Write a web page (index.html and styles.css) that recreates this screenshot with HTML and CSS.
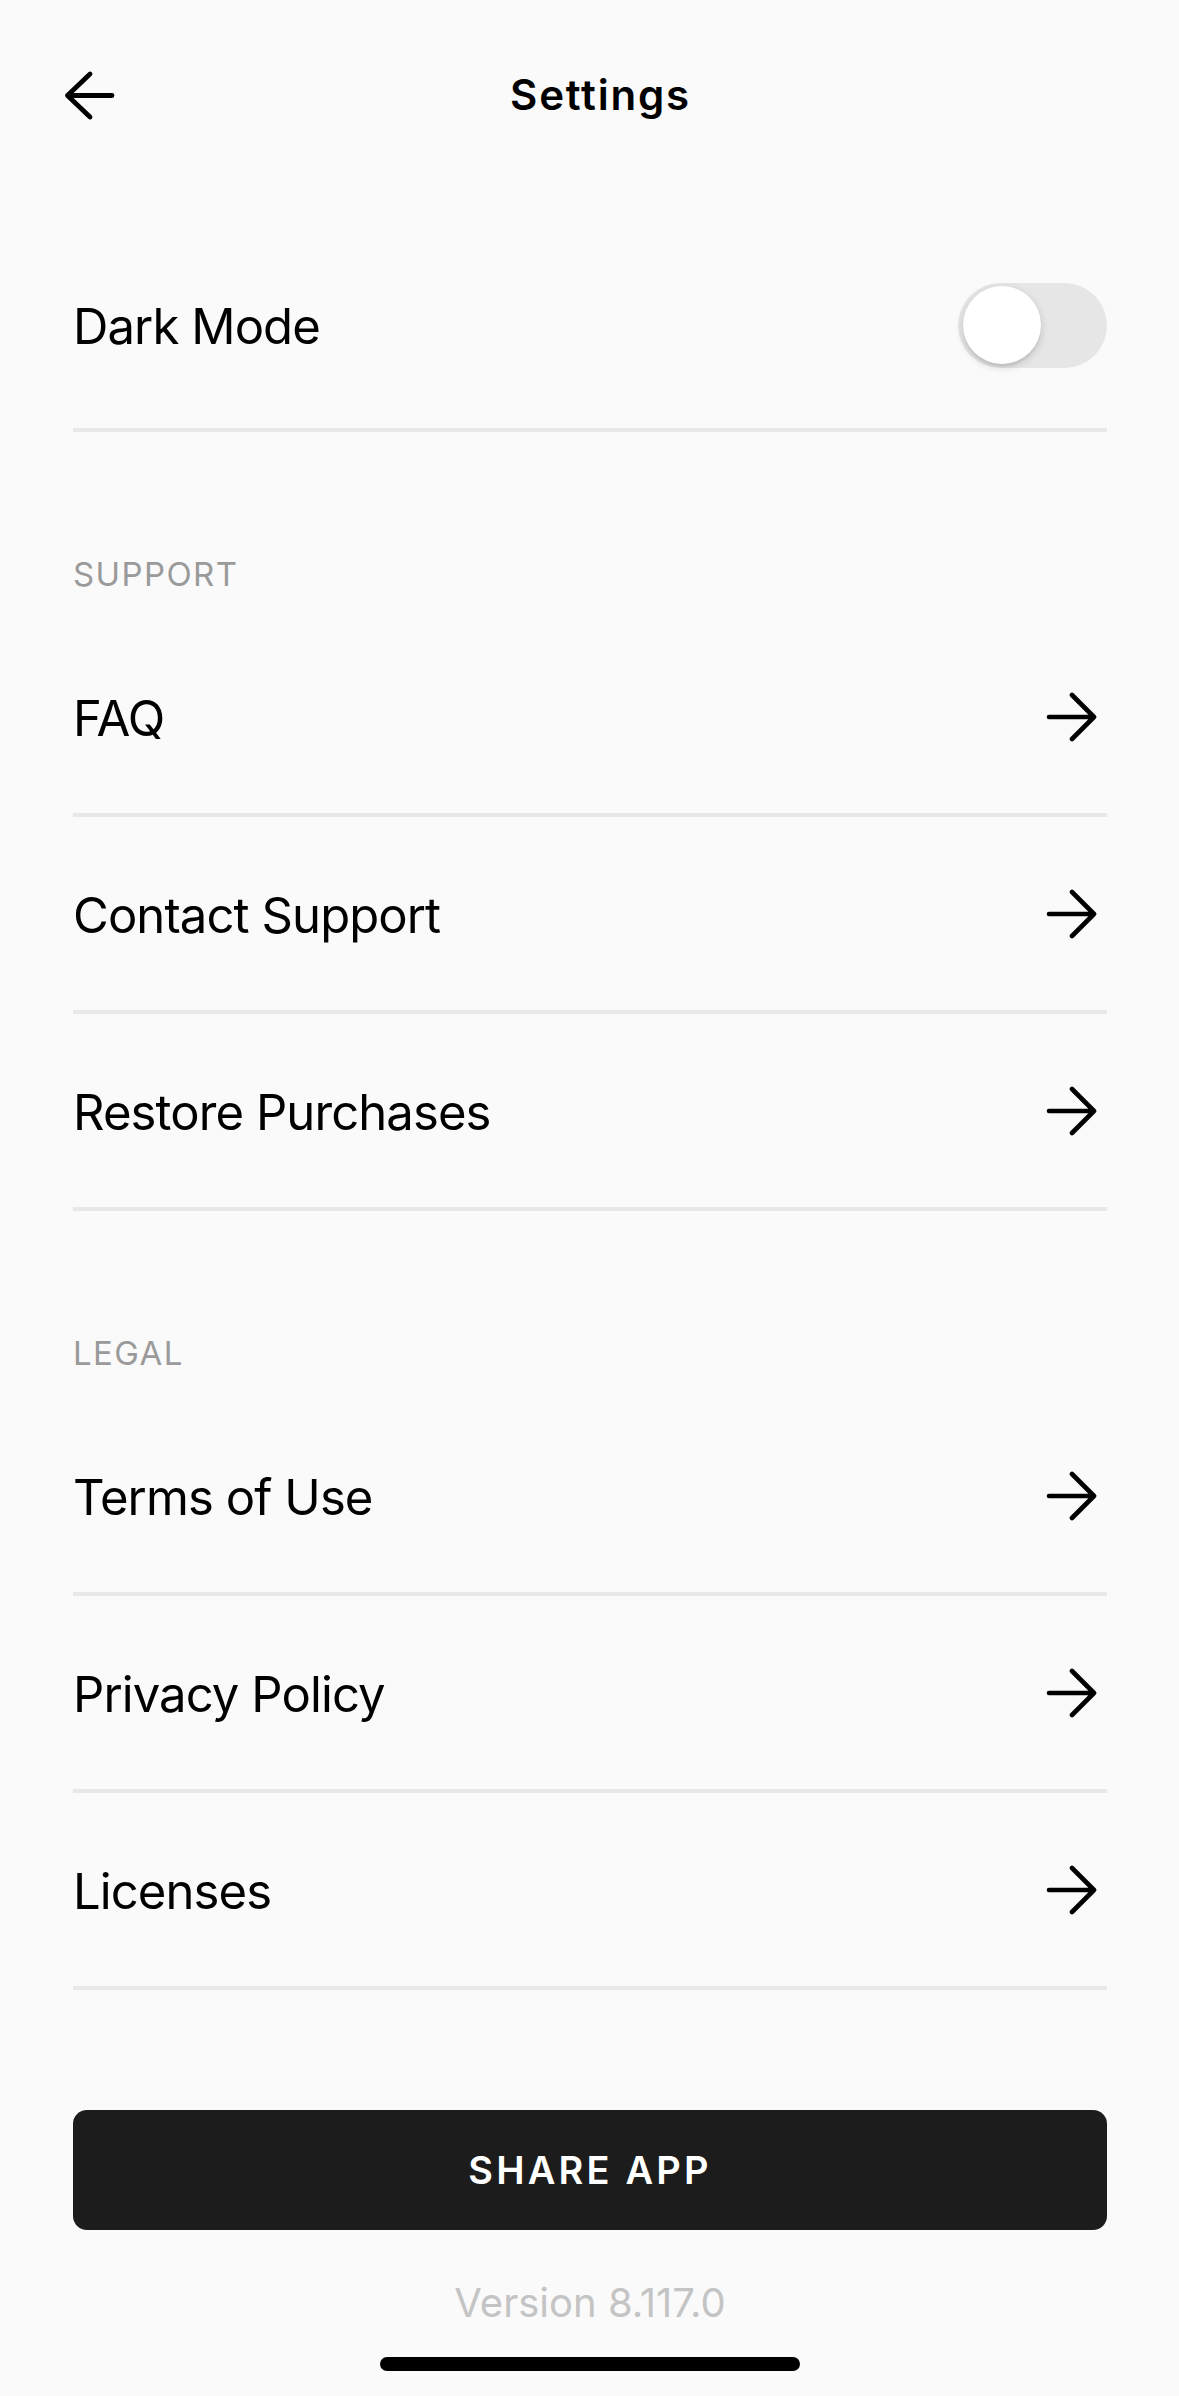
FILE: index.html
```html
<!DOCTYPE html>
<html lang="en">
<head>
<meta charset="utf-8">
<title>Settings</title>
<link rel="stylesheet" href="styles.css">
</head>
<body>
<div class="screen">
  <header class="header">
    <div class="header-left">
      <svg class="back" viewBox="0 0 55 55" width="55" height="55" aria-hidden="true">
        <path d="M50 27.5 H5.5 M28 6 L5.5 27.5 L28 49" fill="none" stroke="#000" stroke-width="4.8" stroke-linecap="round" stroke-linejoin="round"/>
      </svg>
    </div>
    <h1 class="title">Settings</h1>
    <div class="header-right"></div>
  </header>

  <main class="content">
    <div class="row row-toggle">
      <span class="row-label">Dark Mode</span>
      <span class="switch"><span class="knob"></span></span>
    </div>

    <div class="section-title">SUPPORT</div>
    <div class="row"><span class="row-label">FAQ</span><svg class="chev" viewBox="0 0 52 52" width="52" height="52" aria-hidden="true"><path d="M4 26 H49 M27 4 L49 26 L27 48" fill="none" stroke="#000" stroke-width="4.6" stroke-linecap="round" stroke-linejoin="round"/></svg></div>
    <div class="row"><span class="row-label">Contact Support</span><svg class="chev" viewBox="0 0 52 52" width="52" height="52" aria-hidden="true"><path d="M4 26 H49 M27 4 L49 26 L27 48" fill="none" stroke="#000" stroke-width="4.6" stroke-linecap="round" stroke-linejoin="round"/></svg></div>
    <div class="row"><span class="row-label">Restore Purchases</span><svg class="chev" viewBox="0 0 52 52" width="52" height="52" aria-hidden="true"><path d="M4 26 H49 M27 4 L49 26 L27 48" fill="none" stroke="#000" stroke-width="4.6" stroke-linecap="round" stroke-linejoin="round"/></svg></div>

    <div class="section-title">LEGAL</div>
    <div class="row"><span class="row-label">Terms of Use</span><svg class="chev" viewBox="0 0 52 52" width="52" height="52" aria-hidden="true"><path d="M4 26 H49 M27 4 L49 26 L27 48" fill="none" stroke="#000" stroke-width="4.6" stroke-linecap="round" stroke-linejoin="round"/></svg></div>
    <div class="row"><span class="row-label">Privacy Policy</span><svg class="chev" viewBox="0 0 52 52" width="52" height="52" aria-hidden="true"><path d="M4 26 H49 M27 4 L49 26 L27 48" fill="none" stroke="#000" stroke-width="4.6" stroke-linecap="round" stroke-linejoin="round"/></svg></div>
    <div class="row"><span class="row-label">Licenses</span><svg class="chev" viewBox="0 0 52 52" width="52" height="52" aria-hidden="true"><path d="M4 26 H49 M27 4 L49 26 L27 48" fill="none" stroke="#000" stroke-width="4.6" stroke-linecap="round" stroke-linejoin="round"/></svg></div>

    <button class="share" type="button">SHARE APP</button>
    <div class="version">Version 8.117.0</div>
  </main>

  <div class="home-bar"></div>
</div>
</body>
</html>
```

FILE: styles.css
```css
* { box-sizing: border-box; }

html, body {
  margin: 0;
  padding: 0;
  background: #fafafa;
}

body {
  font-family: Inter, "Noto Sans", "Liberation Sans", sans-serif;
  color: #000;
  width: 1179px;
  height: 2396px;
  overflow: hidden;
}

.screen {
  display: flex;
  flex-direction: column;
  height: 2396px;
}

.header {
  height: 190px;
  display: grid;
  grid-template-columns: 1fr auto 1fr;
  align-items: center;
}

.header-left {
  display: flex;
  align-items: center;
  padding-left: 62px;
}

.back { display: block; }

.title {
  margin: 0;
  padding-left: 22px;
  font-size: 42px;
  font-weight: 600;
  letter-spacing: 1.8px;
  line-height: 50px;
}

.content {
  display: flex;
  flex-direction: column;
  padding: 0 72px 0 73px;
}

.row {
  height: 197px;
  display: flex;
  align-items: center;
  justify-content: space-between;
  border-bottom: 4px solid #e8e8e8;
}

.row-toggle {
  margin-top: 32px;
  height: 210px;
}

.row-label {
  font-size: 49px;
  font-weight: 400;
  letter-spacing: -0.9px;
  line-height: 60px;
  padding-top: 4px;
}

.chev {
  display: block;
  margin-right: 10px;
}

.switch {
  width: 149px;
  height: 85px;
  border-radius: 43px;
  background: #e6e6e6;
  display: flex;
  align-items: center;
  padding-left: 5px;
}

.knob {
  width: 78px;
  height: 78px;
  border-radius: 50%;
  background: #fff;
  box-shadow: 0 3px 8px rgba(0, 0, 0, 0.16), 0 3px 1px rgba(0, 0, 0, 0.05);
}

.section-title {
  padding-top: 122px;
  padding-bottom: 26px;
  font-size: 33px;
  line-height: 40px;
  letter-spacing: 1.4px;
  color: #9a9a9a;
}

.share {
  margin-top: 120px;
  height: 120px;
  width: 100%;
  border: 0;
  border-radius: 14px;
  background: #1c1c1c;
  color: #fff;
  font-family: Inter, "Noto Sans", "Liberation Sans", sans-serif;
  font-size: 38px;
  font-weight: 600;
  letter-spacing: 3.2px;
  padding: 0;
}

.version {
  margin-top: 53px;
  text-align: center;
  font-size: 40px;
  line-height: 40px;
  color: #c4c4c4;
}

.home-bar {
  margin: 34px auto 0;
  width: 420px;
  height: 14px;
  border-radius: 7px;
  background: #000;
}
```
